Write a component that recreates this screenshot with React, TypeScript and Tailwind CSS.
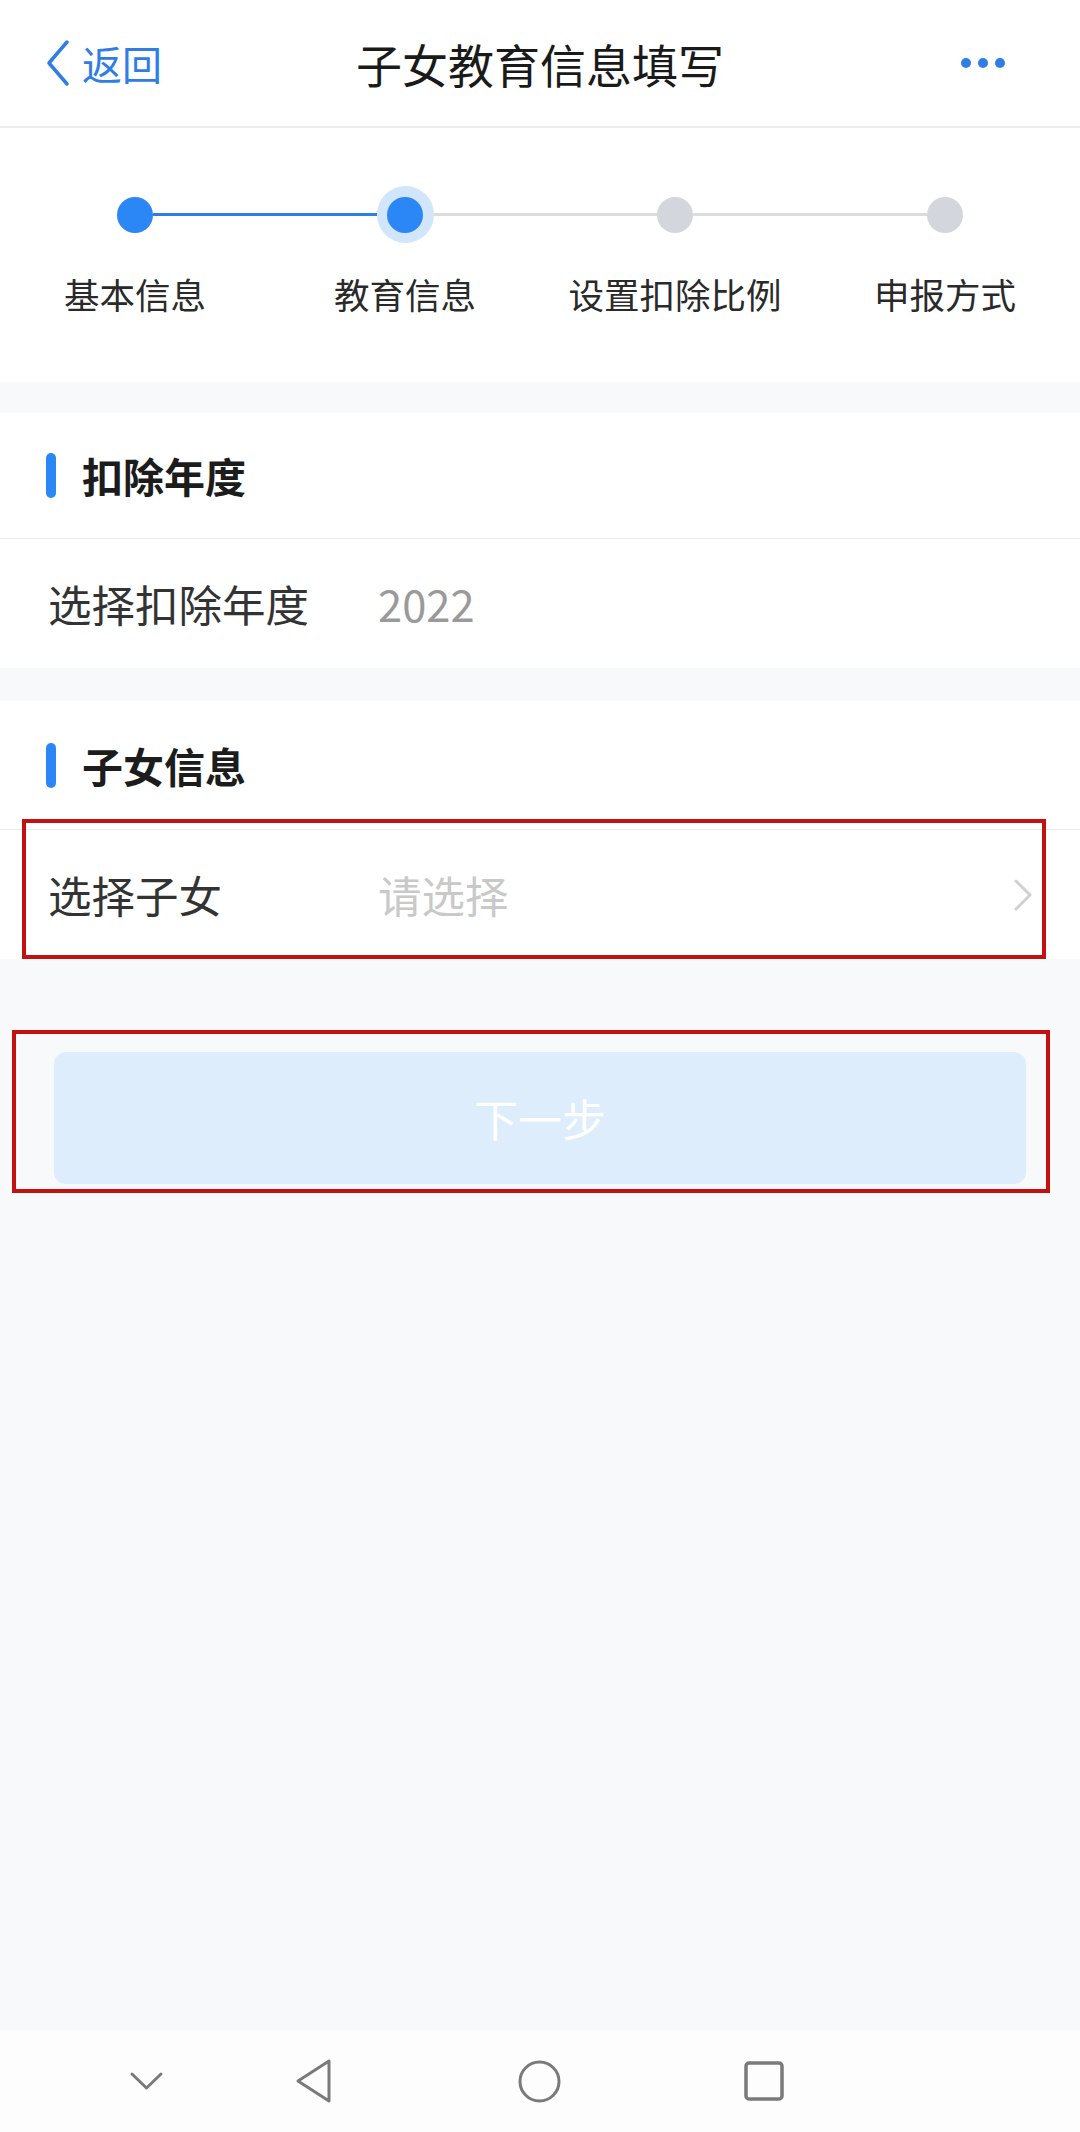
import React from 'react';

const font = { fontFamily: '"Noto Sans CJK SC", "Noto Sans", sans-serif' };

const steps = ['基本信息', '教育信息', '设置扣除比例', '申报方式'];
const current = 1;

const Stepper: React.FC = () => (
  <div className="bg-white h-[254px] pt-[58px] grid grid-cols-4">
    {steps.map((label, i) => (
      <div key={label} className="flex flex-col items-center">
        <div className="w-full h-[57px] flex items-center">
          <div className={`flex-1 h-[3px] ${i === 0 ? 'bg-transparent' : i <= current ? 'bg-[#2b7fe8]' : 'bg-[#dcdcdc]'}`} />
          {i === current ? (
            <div className="w-[57px] h-[57px] rounded-full bg-[#d2e6fb] flex items-center justify-center">
              <div className="w-[36px] h-[36px] rounded-full bg-[#2b86f6]" />
            </div>
          ) : (
            <div className={`w-[36px] h-[36px] rounded-full ${i < current ? 'bg-[#2b86f6]' : 'bg-[#d3d6dc]'}`} />
          )}
          <div className={`flex-1 h-[3px] ${i === steps.length - 1 ? 'bg-transparent' : i < current ? 'bg-[#2b7fe8]' : 'bg-[#dcdcdc]'}`} />
        </div>
        <div className="mt-[30px] text-[35.5px] leading-[42px] text-[#2a2a2a]">{label}</div>
      </div>
    ))}
  </div>
);

const SectionHeader: React.FC<{ title: string; h: string }> = ({ title, h }) => (
  <div className={`${h} flex items-center border-b border-[#ebebeb] pl-[46px]`}>
    <div className="w-[10px] h-[45px] rounded-full bg-[#2b86f6]" />
    <div className="ml-[26px] text-[41px] leading-none font-bold text-[#1c1c1c]">{title}</div>
  </div>
);

export default function App() {
  return (
    <div className="w-[1080px] h-[2132px] flex flex-col bg-[#f8f9fb]" style={font}>
      {/* header */}
      <div className="h-[128px] bg-white border-b-2 border-[#ededed] grid grid-cols-[1fr_auto_1fr] items-center">
        <div className="flex items-center pl-[45px] text-[#2f7ee6]">
          <svg width="26" height="48" viewBox="0 0 26 48" fill="none">
            <path d="M22 3 L4 24 L22 45" stroke="#2f7ee6" strokeWidth="3.5" strokeLinecap="round" strokeLinejoin="round" />
          </svg>
          <span className="ml-[11px] text-[40px] leading-none">返回</span>
        </div>
        <div className="text-[46px] leading-none text-[#1a1a1a]">子女教育信息填写</div>
        <div className="flex justify-end items-center gap-[7px] pr-[75px]">
          <div className="w-[10px] h-[10px] rounded-full bg-[#2f7ee6]" />
          <div className="w-[10px] h-[10px] rounded-full bg-[#2f7ee6]" />
          <div className="w-[10px] h-[10px] rounded-full bg-[#2f7ee6]" />
        </div>
      </div>

      <Stepper />

      {/* 扣除年度 */}
      <div className="mt-[31px] bg-white">
        <SectionHeader title="扣除年度" h="h-[126px]" />
        <div className="h-[129px] flex items-center pl-[48px] text-[43.5px] leading-none">
          <span className="w-[330px] text-[#333333]">选择扣除年度</span>
          <span className="text-[#9a9a9a]">2022</span>
        </div>
      </div>

      {/* 子女信息 */}
      <div className="mt-[33px] bg-white">
        <SectionHeader title="子女信息" h="h-[129px]" />
        <div className="relative h-[129px] flex items-center pl-[48px] pr-[46px] text-[43.5px] leading-none">
          <span className="w-[330px] text-[#333333]">选择子女</span>
          <span className="flex-1 text-[#c9c9c9]">请选择</span>
          <svg width="22" height="34" viewBox="0 0 22 34" fill="none">
            <path d="M4 3 L18 17 L4 31" stroke="#d0d0d0" strokeWidth="3" strokeLinecap="round" strokeLinejoin="round" />
          </svg>
          <div className="absolute -top-[11px] left-[22px] right-[34px] bottom-0 border-[4px] border-[#c31010]" />
        </div>
      </div>

      {/* next button */}
      <div className="mt-[71px] mx-[12px] w-[1038px] border-[4px] border-[#c31010] pl-[38px] pr-[20px] pt-[18px] pb-[5px]">
        <div className="h-[132px] rounded-[12px] bg-[#deedfb] flex items-center justify-center text-[44px] leading-none text-white">
          下一步
        </div>
      </div>

      <div className="flex-1" />

      {/* system nav bar */}
      <div className="h-[102px] bg-[#fdfdfd] flex items-center pl-[129px]">
        <svg width="35" height="20" viewBox="0 0 35 20" fill="none">
          <path d="M3 3 L17.5 17 L32 3" stroke="#7a7a7a" strokeWidth="3" strokeLinecap="round" strokeLinejoin="round" />
        </svg>
        <svg className="ml-[131px]" width="37" height="44" viewBox="0 0 37 44" fill="none">
          <path d="M34 2 L34 42 L3 22 Z" stroke="#7a7a7a" strokeWidth="3" strokeLinejoin="round" />
        </svg>
        <svg className="ml-[186px]" width="43" height="43" viewBox="0 0 43 43" fill="none">
          <circle cx="21.5" cy="21.5" r="19.5" stroke="#7a7a7a" strokeWidth="3" />
        </svg>
        <svg className="ml-[183px]" width="40" height="40" viewBox="0 0 40 40" fill="none">
          <rect x="2" y="2" width="36" height="36" rx="3" stroke="#7a7a7a" strokeWidth="3.5" />
        </svg>
      </div>
    </div>
  );
}
